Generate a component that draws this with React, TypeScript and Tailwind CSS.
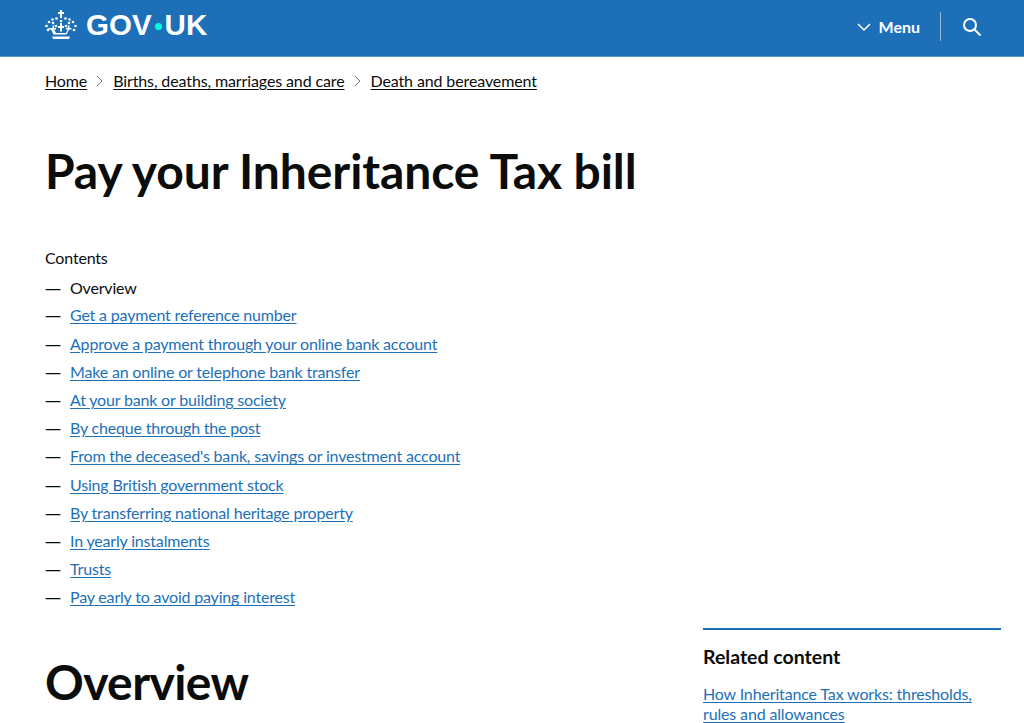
const contents = [
  "Get a payment reference number",
  "Approve a payment through your online bank account",
  "Make an online or telephone bank transfer",
  "At your bank or building society",
  "By cheque through the post",
  "From the deceased's bank, savings or investment account",
  "Using British government stock",
  "By transferring national heritage property",
  "In yearly instalments",
  "Trusts",
  "Pay early to avoid paying interest",
];

const crumbs = ["Births, deaths, marriages and care", "Death and bereavement"];

function Crown() {
  const dots = [
    [16, 11], [11.5, 8.5], [20.5, 8.5], [7.5, 9.5], [24.5, 9.5], [4, 12], [28, 12],
    [1.5, 16], [30.5, 16], [3, 20], [29, 20], [8, 13], [24, 13], [11, 16], [21, 16],
  ];
  return (
    <svg width="32" height="30" viewBox="0 0 32 30" fill="white" aria-hidden="true">
      <path d="M15 0h2v2h2v2h-2v4h-2V4h-2V2h2z" />
      {dots.map(([cx, cy]) => (
        <circle key={`${cx}-${cy}`} cx={cx} cy={cy} r="1.3" />
      ))}
      <path d="M15 13h2v3h2v2h-2v3l-1 1-1-1v-3h-2v-2h2z" />
      <path d="M7.5 15.5h1.6v2.5h1.9v1.6H9.1l2 3.4h9.8l2-3.4H21v-1.6h1.9v-2.5h1.6v2.5h2v1.6h-2.4l-2.6 5H8.5l-2.6-5H3.5v-1.6h4z" />
      <path d="M7 26.5h18l-1 2.5H8z" />
    </svg>
  );
}

function Header() {
  return (
    <header className="h-[57px] bg-[#1d70b8] border-b border-[#5694ca] pl-[45px] pr-[42px] flex items-center justify-between text-white">
      <div className="flex items-center gap-[9px] -mt-[6px]">
        <Crown />
        <span className="text-[29.5px] leading-none font-bold flex items-center font-['Liberation_Sans',sans-serif]">
          GOV<span className="mx-[3px] w-[7px] h-[7px] rounded-full bg-[#00ffe0] mt-[2px]" />UK
        </span>
      </div>
      <div className="flex items-center -mt-[3px]">
        <svg width="14" height="9" viewBox="0 0 14 9" fill="none" stroke="white" strokeWidth="1.5" className="mr-[8px] mt-[2px]" aria-hidden="true">
          <path d="M1 1l6 6 6-6" />
        </svg>
        <span className="text-[16px] font-bold">Menu</span>
        <div className="w-px h-[29px] bg-[#8eb8dc] ml-[20px] mr-[21px]" />
        <svg width="20" height="20" viewBox="0 0 20 20" fill="none" stroke="white" strokeWidth="2" aria-hidden="true">
          <circle cx="8" cy="8" r="6" />
          <path d="M12.5 12.5l6 6" />
        </svg>
      </div>
    </header>
  );
}

function Dash() {
  return <span className="w-[25px] font-['Noto_Sans',sans-serif]">—</span>;
}

export default function App() {
  return (
    <div className="h-[723px] overflow-hidden bg-white text-[#0b0c0c] font-['Lato','Liberation_Sans',sans-serif]">
      <Header />
      <main className="pl-[45px] pr-[23px]">
        <nav className="flex items-center h-[24px] mt-[12px] text-[16px] tracking-[-0.12px]">
          <a className="underline underline-offset-2">Home</a>
          {crumbs.map((c) => (
            <span key={c} className="flex items-center">
              <svg width="8" height="12" viewBox="0 0 8 12" fill="none" stroke="#6f777b" strokeWidth="1" className="mx-[9px]" aria-hidden="true">
                <path d="M1 1l5 5-5 5" />
              </svg>
              <a className="underline underline-offset-2">{c}</a>
            </span>
          ))}
        </nav>
        <h1 className="mt-[48px] text-[48px] leading-[60px] font-bold tracking-[-0.1px]">Pay your Inheritance Tax bill</h1>
        <div className="mt-[43px] text-[16px] leading-[28.2px] tracking-[-0.18px]">
          <p className="mb-[2px]">Contents</p>
          <ol>
            <li className="flex mb-[-1px]">
              <Dash />
              <span>Overview</span>
            </li>
            {contents.map((t) => (
              <li key={t} className="flex">
                <Dash />
                <a className="text-[#1d70b8] underline underline-offset-2">{t}</a>
              </li>
            ))}
          </ol>
        </div>
        <div className="flex justify-between mt-[16.5px]">
          <h2 className="mt-[24px] text-[48px] leading-[60px] font-bold tracking-[-0.6px]">Overview</h2>
          <aside className="w-[298px] border-t-2 border-[#1d70b8] pt-[14px]">
            <h3 className="text-[19.5px] leading-[26px] font-bold">Related content</h3>
            <p className="mt-[14px] text-[16px] leading-[20px] tracking-[-0.15px]">
              <a className="text-[#1d70b8] underline underline-offset-2">How Inheritance Tax works: thresholds, rules and allowances</a>
            </p>
          </aside>
        </div>
      </main>
    </div>
  );
}
